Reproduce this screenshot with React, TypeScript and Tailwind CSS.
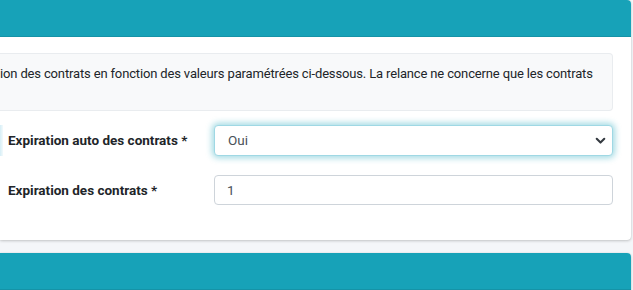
import React from "react";

function Chevron() {
  return (
    <svg width="11" height="11" viewBox="0 0 16 16" className="text-[#343a40]">
      <path d="M2.5 5.5l5.5 5.5 5.5-5.5" fill="none" stroke="currentColor" strokeWidth="3" strokeLinecap="round" strokeLinejoin="round" />
    </svg>
  );
}

export default function App() {
  return (
    <div
      className="w-[633px] h-[290px] overflow-hidden bg-[#f4f6f9] text-[#212529]"
      style={{ fontFamily: 'Roboto, "Noto Sans", sans-serif' }}
    >
      {/* Paramètres card */}
      <div className="w-[631px] bg-white rounded-r-[4px] shadow-[0_0_1px_rgba(0,0,0,0.125),0_1px_3px_rgba(0,0,0,0.2)]">
        <div className="h-[37px] bg-[#17a2b8] border-b border-[#1593a7] rounded-tr-[4px]" />

        <div className="pt-[16px] pr-[18px] pb-[35px]">
          {/* Info box */}
          <div className="h-[58px] bg-[#f8f9fa] border border-l-0 border-[#e9ecef] rounded-r-[4px] pt-[9px]">
            <p className="text-[13px] tracking-[-0.15px] leading-[21px] whitespace-nowrap">
              ion des contrats en fonction des valeurs paramétrées ci-dessous. La relance ne concerne que les contrats
            </p>
          </div>

          {/* Row 1 */}
          <div className="flex items-center mt-[14px] h-[31px]">
            <div className="w-[3px] h-[31px] bg-gradient-to-r from-[#d6eef6] to-[#f3fafc]" />
            <label className="w-[211px] pl-[5px] text-[13.5px] font-bold whitespace-nowrap">Expiration auto des contrats *</label>
            <div className="flex-1 h-[31px] flex items-center justify-between pl-[13px] pr-[6px] bg-white border border-[#9fd8e4] rounded-[4px] shadow-[0_0_6px_2px_rgba(23,162,184,0.4)] text-[13.5px] text-[#495057]">
              <span>Oui</span>
              <Chevron />
            </div>
          </div>

          {/* Row 2 */}
          <div className="flex items-center mt-[19px] h-[30px]">
            <label className="w-[214px] pl-[8px] text-[13.5px] font-bold whitespace-nowrap">Expiration des contrats *</label>
            <div className="flex-1 h-[30px] flex items-center pl-[12px] bg-white border border-[#ced4da] rounded-[4px] text-[13.5px] text-[#495057]">
              1
            </div>
          </div>
        </div>
      </div>

      {/* Next card */}
      <div className="w-[631px] mt-[13px] bg-white rounded-tr-[4px] shadow-[0_0_1px_rgba(0,0,0,0.125),0_1px_3px_rgba(0,0,0,0.2)]">
        <div className="h-[37px] bg-[#17a2b8] border-b border-[#1593a7] rounded-tr-[4px]" />
      </div>
    </div>
  );
}
